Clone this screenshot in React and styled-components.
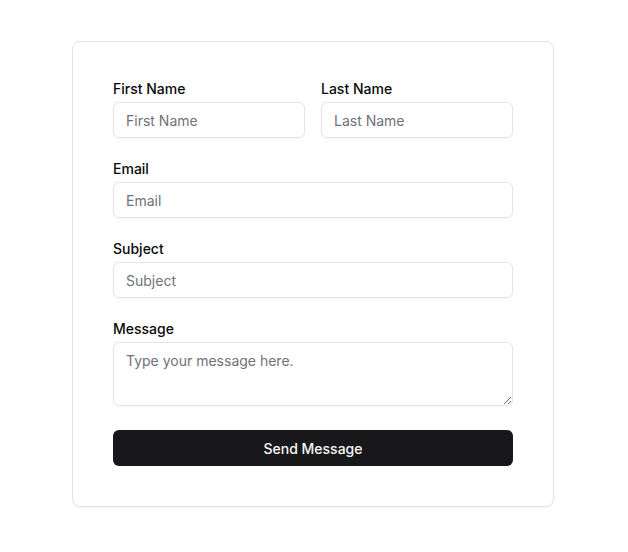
import React from "react";
import styled, { createGlobalStyle } from "styled-components";

const GlobalStyle = createGlobalStyle`
  * {
    box-sizing: border-box;
  }
  body {
    margin: 0;
    background: #ffffff;
    font-family: Inter, "Noto Sans", sans-serif;
    color: #09090b;
  }
`;

const Page = styled.div`
  display: flex;
  justify-content: center;
  padding: 41px 2px 40px 0;
`;

const Card = styled.form`
  width: 482px;
  padding: 40px;
  border: 1px solid #e4e4e7;
  border-radius: 8px;
  background: #fff;
  box-shadow: 0 1px 2px rgba(0, 0, 0, 0.03);
  display: flex;
  flex-direction: column;
  gap: 24px;
`;

const Row = styled.div`
  display: grid;
  grid-template-columns: 1fr 1fr;
  gap: 16px;
`;

const Field = styled.div`
  display: flex;
  flex-direction: column;
  gap: 6px;
`;

const Label = styled.label`
  font-size: 14px;
  line-height: 14px;
  font-weight: 500;
  color: #09090b;
`;

const Input = styled.input`
  height: 36px;
  width: 100%;
  padding: 0 12px;
  border: 1px solid #e4e4e7;
  border-radius: 6px;
  font-family: inherit;
  font-size: 14px;
  color: #09090b;
  background: transparent;
  box-shadow: 0 1px 2px rgba(0, 0, 0, 0.04);
  outline: none;

  &::placeholder {
    color: #71717a;
  }
`;

const TextArea = styled.textarea`
  height: 64px;
  width: 100%;
  padding: 8px 12px;
  border: 1px solid #e4e4e7;
  border-radius: 6px;
  font-family: inherit;
  font-size: 14px;
  line-height: 20px;
  color: #09090b;
  background: transparent;
  box-shadow: 0 1px 2px rgba(0, 0, 0, 0.04);
  outline: none;
  display: block;

  &::placeholder {
    color: #71717a;
  }
`;

const Button = styled.button`
  height: 36px;
  width: 100%;
  border: none;
  border-radius: 6px;
  background: #18181b;
  color: #fafafa;
  font-family: inherit;
  font-size: 14px;
  font-weight: 500;
  cursor: pointer;
`;

const TextField = ({ id, label, placeholder, type = "text" }) => (
  <Field>
    <Label htmlFor={id}>{label}</Label>
    <Input id={id} type={type} placeholder={placeholder} />
  </Field>
);

export default function App() {
  return (
    <>
      <GlobalStyle />
      <Page>
        <Card onSubmit={(e) => e.preventDefault()}>
          <Row>
            <TextField id="first" label="First Name" placeholder="First Name" />
            <TextField id="last" label="Last Name" placeholder="Last Name" />
          </Row>
          <TextField id="email" label="Email" placeholder="Email" type="email" />
          <TextField id="subject" label="Subject" placeholder="Subject" />
          <Field>
            <Label htmlFor="message">Message</Label>
            <TextArea id="message" placeholder="Type your message here." />
          </Field>
          <Button type="submit">Send Message</Button>
        </Card>
      </Page>
    </>
  );
}
